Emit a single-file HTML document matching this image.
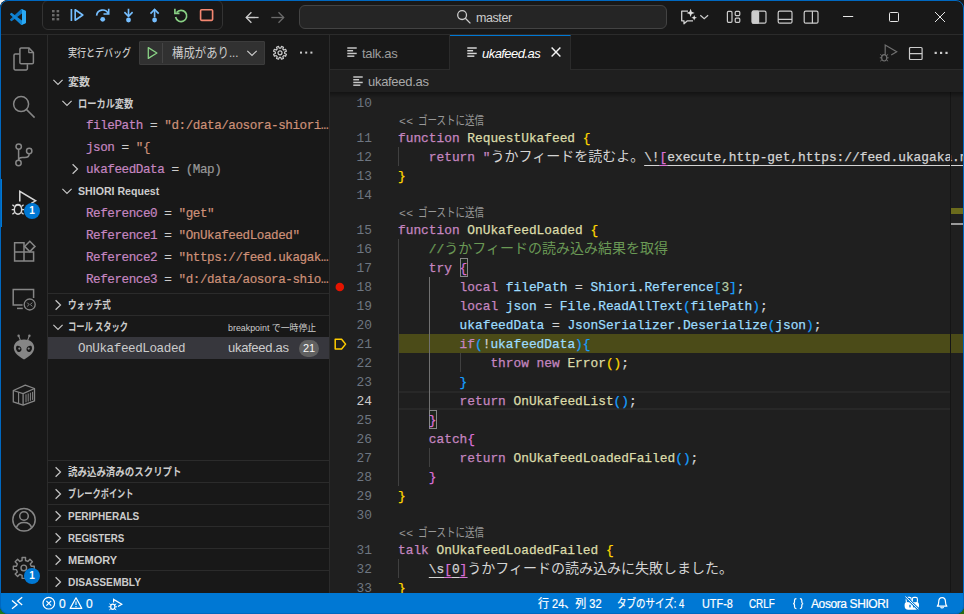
<!DOCTYPE html>
<html lang="ja">
<head>
<meta charset="utf-8">
<title>ukafeed.as - master - Visual Studio Code</title>
<style>
*{box-sizing:border-box}
html,body{margin:0;padding:0;width:964px;height:614px;overflow:hidden;background:#1a1a1a}
body{font-family:"Liberation Sans","Noto Sans CJK JP",sans-serif;font-size:13px;color:#ccc;position:relative}
.abs{position:absolute}
svg{display:block;overflow:visible}
.corner{position:absolute;width:10px;height:10px}
#win{position:absolute;left:0;top:0;width:964px;height:614px;background:#181818;border-radius:8px;overflow:hidden}
#frame{position:absolute;left:0;top:0;width:964px;height:614px;border:1px solid #0068c0;border-radius:8px;z-index:50}
/* title bar */
#title{position:absolute;left:0;top:0;width:964px;height:35px;background:#181818;border-bottom:1px solid #2b2b2b}
#dbgbar{position:absolute;left:42px;top:0;width:181px;height:30px;border:1px solid #333;border-radius:6px;background:#181818}
#cmd{position:absolute;left:299px;top:5px;width:368px;height:24px;border:1px solid #434343;border-radius:6px;background:#252525}
#cmd .lbl{position:absolute;left:176px;top:4px;font-size:12.500px;letter-spacing:-0.420px;color:#ccc;line-height:16px;white-space:nowrap}
/* activity bar */
#act{position:absolute;left:0;top:35px;width:48px;height:558px;background:#181818;border-right:1px solid #2b2b2b}
.badge{position:absolute;width:16px;height:16px;border-radius:8px;background:#0078d4;color:#fff;font-size:10px;font-weight:bold;line-height:16px;text-align:center}
/* sidebar */
#side{position:absolute;left:48px;top:35px;width:282px;height:558px;background:#181818;border-right:1px solid #2b2b2b;overflow:hidden}
.sx{display:inline-block;transform-origin:0 50%;white-space:nowrap}
.ph{position:absolute;left:0;width:281px;height:22px;border-top:1px solid #2b2b2b;font-size:11px;font-weight:bold;color:#ccc;line-height:21px;white-space:nowrap}
.ph .t{position:absolute;left:20px;top:1px}
.row{position:absolute;left:0;width:281px;height:22px;line-height:22px;white-space:nowrap;overflow:hidden}
.mono{font-family:"Liberation Mono","Noto Sans CJK JP",monospace}
.var{font-family:"Liberation Mono","Noto Sans CJK JP",monospace;font-size:12.6px;letter-spacing:-0.44px;-webkit-text-stroke:0.200px;position:absolute;left:38px;top:1px;white-space:pre}
.vn{color:#c586c0}
.vs{color:#ce9178}
.vg{color:#999}
.grp{position:absolute;left:30px;top:1px;font-size:11px;font-weight:bold;color:#ccc}
/* editor */
#ed{position:absolute;left:330px;top:35px;width:634px;height:558px;background:#1f1f1f;overflow:hidden}
#tabs{position:absolute;left:0;top:0;width:634px;height:35px;background:#181818;border-bottom:1px solid #2b2b2b}
.tab{position:absolute;top:0;height:35px;border-right:1px solid #2b2b2b;font-size:13px;line-height:35px;white-space:nowrap}
#bc{position:absolute;left:0;top:35px;width:634px;height:22px;background:#1f1f1f;font-size:13px;color:#a9a9a9;line-height:22px}
#code{position:absolute;left:0;top:57px;width:634px;height:501px;overflow:hidden}
.ln{position:absolute;left:0;width:42px;text-align:right;font-family:"Liberation Mono",monospace;font-size:12.83px;color:#6e7681;line-height:19px;height:19px;padding-top:1px}
.cl{position:absolute;left:68px;height:19px;line-height:19px;font-family:"Liberation Mono","Noto Sans CJK JP",monospace;font-size:12.83px;white-space:pre;color:#d4d4d4;padding-top:1px;-webkit-text-stroke:0.25px}
.ln.cur{color:#ccc}
.cl .j{font-size:14px;-webkit-text-stroke:0}
.lens{position:absolute;left:69px;height:16px;line-height:16px;font-size:12px;color:#999;white-space:nowrap}
.k{color:#c586c0}.f{color:#dcdcaa}.v{color:#9cdcfe}.s{color:#ce9178}.c{color:#6a9955}.n{color:#b5cea8}
.b1{color:#ffd700}.b2{color:#da70d6}.b3{color:#179fff}
.u,.u span{text-decoration:underline;text-decoration-thickness:1px;text-underline-offset:4px;text-decoration-skip-ink:none}
.g{position:absolute;width:1px;background:#404040}
/* status */
#status{position:absolute;left:0;top:593px;width:964px;height:21px;background:#0078d4;color:#fff;font-size:12px;line-height:22px;white-space:nowrap}
#status .it{position:absolute;top:0;height:22px;line-height:22px;-webkit-text-stroke:0.2px}
</style>
</head>
<body>
<div class="corner" style="left:0;top:0;background:#f3f3f3"></div>
<div class="corner" style="right:0;top:0;background:#1a1a1a"></div>
<div class="corner" style="left:0;bottom:0;background:#1e7a1e"></div>
<div class="corner" style="right:0;bottom:0;background:#2a6a10"></div>
<div id="win">

<!-- TITLE BAR -->
<div id="title">
<svg class="abs" style="left:10px;top:9px" width="16" height="16" viewBox="0 0 100 100">
<path fill="#0b76c4" d="M96.46 10.8 75.86.88a6.23 6.23 0 0 0-7.1 1.2L1.3 63.58a4.17 4.17 0 0 0 0 6.16l5.5 5a4.17 4.17 0 0 0 5.33.24L93.35 13.4c2.73-2.07 6.64-.12 6.64 3.3v-.24a6.25 6.25 0 0 0-3.53-5.63z"/>
<path fill="#1186d6" d="M96.46 89.2 75.86 99.1a6.23 6.23 0 0 1-7.1-1.2L1.3 36.4a4.17 4.17 0 0 1 0-6.16l5.5-5a4.17 4.17 0 0 1 5.33-.24L93.35 86.6c2.73 2.07 6.64.12 6.64-3.3v.24a6.25 6.25 0 0 1-3.53 5.63z"/>
<path fill="#2aa9f4" d="M75.86 99.13a6.23 6.23 0 0 1-7.1-1.21c2.3 2.3 6.25.67 6.25-2.59V4.67c0-3.26-3.94-4.89-6.25-2.59a6.23 6.23 0 0 1 7.1-1.21l20.6 9.9A6.25 6.25 0 0 1 100 16.4v67.2a6.25 6.25 0 0 1-3.54 5.63z"/>
</svg>
<div id="dbgbar"></div>
<svg class="abs" style="left:0;top:0" width="964" height="35" viewBox="0 0 964 35" fill="none" stroke-linecap="butt" stroke-linejoin="miter">
<!-- gripper -->
<g fill="#6b6b6b" stroke="none">
<rect x="52" y="10" width="2.6" height="2.4"/><rect x="56.6" y="10" width="2.6" height="2.4"/>
<rect x="52" y="14" width="2.6" height="2.4"/><rect x="56.6" y="14" width="2.6" height="2.4"/>
<rect x="52" y="18" width="2.6" height="2.4"/><rect x="56.6" y="18" width="2.6" height="2.4"/>
</g>
<!-- continue -->
<g stroke="#75beff" stroke-width="1.65">
<path d="M71.4 9v12"/>
<path d="M75.2 9.8v10.4l7.6-5.2z" stroke-linejoin="round"/>
</g>
<!-- step over -->
<g stroke="#75beff" stroke-width="1.65">
<path d="M96.6 15.6a6.1 6.1 0 0 1 11.6-2"/>
<path d="M108.7 8.8v5.2h-5.2"/>
<circle cx="102.700" cy="19.300" r="2.400" fill="#75beff" stroke="none"/>
</g>
<!-- step into -->
<g stroke="#75beff" stroke-width="1.65">
<path d="M128.5 8.8v7"/>
<path d="M124.4 12.2l4.1 4.1 4.1-4.1" stroke-linejoin="round"/>
<circle cx="128.5" cy="20" r="2.400" fill="#75beff" stroke="none"/>
</g>
<!-- step out -->
<g stroke="#75beff" stroke-width="1.65">
<path d="M154.6 17.2v-7.6"/>
<path d="M150.5 13.6l4.1-4.1 4.1 4.1"/>
<circle cx="154.6" cy="20" r="2.400" fill="#75beff" stroke="none"/>
</g>
<!-- restart -->
<g stroke="#89d185" stroke-width="1.65">
<path d="M176.6 12.6a5.6 5.6 0 1 1-1 4.4"/>
<path d="M174.9 8.8v4.6h4.6"/>
</g>
<!-- stop -->
<rect x="200.6" y="9.7" width="12" height="10.6" rx="1" stroke="#f48771" stroke-width="1.65"/>
<!-- nav arrows -->
<g stroke="#cccccc" stroke-width="1.3">
<path d="M246.2 17.5h12.4"/><path d="M251.4 12.3l-5.2 5.2 5.2 5.2"/>
</g>
<g stroke="#6b6b6b" stroke-width="1.3">
<path d="M271.300 17.5h12.4"/><path d="M278.500 12.3l5.2 5.2-5.2 5.2"/>
</g>
</svg>
<div id="cmd">
<svg class="abs" style="left:156px;top:3px" width="16" height="16" viewBox="0 0 16 16" fill="none" stroke="#ccc" stroke-width="1.3"><circle cx="6.100" cy="6.100" r="4.400"/><path d="M9.300 9.300l5.100 5.100"/></svg>
<span class="lbl">master</span>
</div>
<svg class="abs" style="left:0;top:0" width="964" height="35" viewBox="0 0 964 35" fill="none">
<!-- copilot chat -->
<g stroke="#d0d0d0" stroke-width="1.3" stroke-linejoin="round">
<path d="M688 11.2h-6.3v9.6h2.3v3l3.4-3h5.6"/>
</g>
<g fill="#e0e0e0">
<path d="M690.6 8.8l1.1 3 3 1.1-3 1.1-1.1 3-1.1-3-3-1.1 3-1.1z"/>
<path d="M694.2 15l.8 2 2 .8-2 .8-.8 2-.8-2-2-.8 2-.8z"/>
</g>
<path d="M700.300 15.200l3.900 3.600 3.900-3.600" stroke="#ccc" stroke-width="1.2"/>
<!-- layout icons -->
<g stroke="#cccccc" stroke-width="1.2">
<rect x="727.4" y="11.4" width="4.6" height="10.900" rx="1"/>
<rect x="735.2" y="11.4" width="4.6" height="4.2" rx="1"/>
<rect x="735.2" y="18.200" width="4.6" height="4.100" rx="1"/>
<rect x="752.2" y="11.2" width="13.8" height="12" rx="1.5"/>
<rect x="752.2" y="11.2" width="6.4" height="12" rx="1" fill="#cccccc"/>
<rect x="778.2" y="11.2" width="13.8" height="12" rx="1.5"/>
<path d="M778.2 19.4h13.8"/>
<rect x="804.2" y="11.2" width="13.8" height="12" rx="1.5"/>
<path d="M812.4 11.2v12"/>
</g>
<!-- window controls -->
<g stroke="#e6e6e6" stroke-width="1">
<path d="M843 16.500h10.200"/>
<rect x="889.500" y="12.500" width="9" height="9" rx="1"/>
<path d="M935 12l10 10M945 12l-10 10"/>
</g>
</svg>
</div>

<!-- ACTIVITY BAR -->
<div id="act">
<div class="abs" style="left:0;top:144px;width:2px;height:48px;background:#0078d4"></div>
<svg class="abs" style="left:0;top:0" width="48" height="557" viewBox="0 35 48 557" fill="none" stroke="#868686" stroke-width="1.5" stroke-linejoin="round">
<!-- explorer -->
<path d="M21.2 47.9h7.6l4.6 4.6v10a1.3 1.3 0 0 1-1.3 1.3H21.2a1.3 1.3 0 0 1-1.3-1.3V49.2a1.3 1.3 0 0 1 1.3-1.3z"/>
<path d="M28.8 48.2v4.4h4.4" stroke-width="1.3"/>
<path d="M19.6 54H15.3a1.3 1.3 0 0 0-1.3 1.3v13.3a1.3 1.3 0 0 0 1.3 1.3h10.8a1.3 1.3 0 0 0 1.3-1.3V64.2"/>
<!-- search -->
<circle cx="21.1" cy="104.1" r="7.5"/><path d="M26.6 109.6l8 8"/>
<!-- scm -->
<circle cx="18.7" cy="146.6" r="2.7"/><circle cx="29.2" cy="151" r="2.7"/><circle cx="18.5" cy="163" r="2.7"/>
<path d="M18.6 149.4v10.8"/><path d="M29.2 153.8c0 2.8-2 3.8-4.4 3.8h-2.4c-2.2 0-3.8.9-3.8 2.6"/>
<!-- debug (active) -->
<g stroke="#d7d7d7">
<path d="M19.8 201.6v-10.2l15.8 9.4-4.4 2.6" stroke-linejoin="miter"/>
<ellipse cx="18" cy="209.6" rx="3.7" ry="4.6"/>
<path d="M15.2 206.4c.6-2.6 5-2.6 5.6 0" stroke-width="1.3"/>
<path d="M14.3 209.6h-2.6M24.3 209.6h-2.6M14.6 206.6l-2.2-1.8M21.4 206.6l2.2-1.8M14.6 212.4l-2.2 1.8M21.4 212.4l2.2 1.8" stroke-width="1.3"/>
</g>
<!-- extensions -->
<path d="M14.6 242.7h9.4v9.2h-9.4zM14.6 251.9h9.4v9.2h-9.4zM24 251.9h9.6v9.2H24z" stroke-linejoin="miter"/>
<path d="M29.8 241.2l5.2 5.2-5.2 5.2-5.2-5.2z" stroke-linejoin="miter"/>
<!-- remote explorer -->
<path d="M22.6 305H13.2v-15.4h20.4v8.4" stroke-linejoin="miter"/>
<path d="M17 308.4h5.8"/>
<circle cx="29.7" cy="304.5" r="5.5" stroke-width="1.3"/>
<path d="M27.2 302.6l1.9 1.9-1.9 1.9M32.2 302.6l-1.9 1.9 1.9 1.9" stroke-width="1"/>
<!-- alien -->
<g stroke="none" fill="#868686">
<path d="M24 339.6c6.2 0 10.2 3.4 10.2 8.2 0 5.2-5.6 9.4-10.2 11.6-4.600-2.2-10.200-6.400-10.200-11.600 0-4.800 4-8.200 10.200-8.200z"/>
<circle cx="18.600" cy="335.800" r="1.200"/><circle cx="29.400" cy="335.800" r="1.200"/>
</g>
<path d="M18.700 336l1.700 4.400M29.300 336l-1.700 4.400" stroke-width="1.100"/>
<g stroke="none" fill="#181818">
<path d="M16.400 346.200c1.800-.9 4.400.1 5 2.400.5 1.800-.5 3.300-2 3.500-2.100.2-4.300-2.700-3-5.900z"/>
<path d="M31.600 346.200c-1.800-.9-4.400.1-5 2.400-.5 1.800.5 3.300 2 3.500 2.100.2 4.300-2.700 3-5.900z"/>
</g>
<g stroke="none" fill="#868686"><circle cx="19.300" cy="348.600" r="1.100"/><circle cx="28.700" cy="348.600" r="1.100"/></g>
<!-- container -->
<g stroke-width="1.300">
<path d="M13.300 390.500l12-5.400 9.200 3.400v12.400l-11.400 4.200-9.800-3.200z"/>
<path d="M13.300 390.500l9.800 3.200 11.400-5.200M23.100 393.700v11.400"/>
<path d="M18.600 392.300v11.200" stroke-width="1.100"/>
<path d="M26 394.300v8M28.200 393.500v8M30.400 392.700v8M32.600 391.900v8" stroke-width="1"/>
</g>
<!-- account -->
<circle cx="24" cy="519.800" r="11.200"/>
<circle cx="24" cy="516" r="4.300"/>
<path d="M16.400 527.800c.9-3.600 3.900-5.400 7.600-5.400s6.700 1.800 7.600 5.400"/>
<!-- gear -->
<g transform="translate(0 35)">
<path d="M31.20 531.18 L34.26 531.16 L34.26 534.64 L31.20 534.62 L30.25 536.92 L32.42 539.06 L29.96 541.52 L27.82 539.35 L25.52 540.30 L25.54 543.36 L22.06 543.36 L22.08 540.30 L19.78 539.35 L17.64 541.52 L15.18 539.06 L17.35 536.92 L16.40 534.62 L13.34 534.64 L13.34 531.16 L16.40 531.18 L17.35 528.88 L15.18 526.74 L17.64 524.28 L19.78 526.45 L22.08 525.50 L22.06 522.44 L25.54 522.44 L25.52 525.50 L27.82 526.45 L29.96 524.28 L32.42 526.74 L30.25 528.88z" stroke-width="1.400"/>
<circle cx="23.800" cy="532.900" r="2.800" stroke-width="1.400"/>
</g>
</svg>
<div class="badge" style="left:24px;top:168px">1</div>
<div class="badge" style="left:24px;top:533px">1</div>
</div>

<!-- SIDEBAR -->
<div id="side">
<div class="abs" style="left:20px;top:9px;font-size:11px;font-weight:500;line-height:18px;color:#ccc;white-space:nowrap"><span class="sx" style="transform:scaleX(0.82)">実行とデバッグ</span></div>
<div class="abs" style="left:91px;top:6px;width:126px;height:24px;background:#313131;border:1px solid #3c3c3c;border-radius:1px">
<svg class="abs" style="left:5px;top:3px" width="16" height="16" viewBox="0 0 16 16" fill="none" stroke="#89d185" stroke-width="1.300" stroke-linejoin="round"><path d="M3.300 2.600v10.800l8.600-5.400z"/></svg>
<div class="abs" style="left:22px;top:1px;width:1px;height:20px;background:#454545"></div>
<div class="abs" style="left:32px;top:1px;font-size:13px;line-height:20px;color:#ccc;white-space:nowrap"><span class="sx" style="transform:scaleX(0.876)">構成があり...</span></div>
<svg class="abs" style="left:104px;top:3px" width="16" height="16" viewBox="0 0 16 16" fill="none" stroke="#ccc" stroke-width="1.200"><path d="M3.300 5.800l4.700 4.700 4.700-4.700"/></svg>
</div>
<svg class="abs" style="left:224px;top:10px" width="16" height="16" viewBox="0 0 16 16" fill="none" stroke="#ccc" stroke-width="1.200" stroke-linejoin="round"><path d="M12.64 8.54 L14.43 9.29 L13.60 11.29 L11.80 10.56 L10.76 11.60 L11.49 13.40 L9.49 14.23 L8.74 12.44 L7.26 12.44 L6.51 14.23 L4.51 13.40 L5.24 11.60 L4.20 10.56 L2.40 11.29 L1.57 9.29 L3.36 8.54 L3.36 7.06 L1.57 6.31 L2.40 4.31 L4.20 5.04 L5.24 4.00 L4.51 2.20 L6.51 1.37 L7.26 3.16 L8.74 3.16 L9.49 1.37 L11.49 2.20 L10.76 4.00 L11.80 5.04 L13.60 4.31 L14.43 6.31 L12.64 7.06z"/><circle cx="8" cy="7.800" r="2"/></svg>
<svg class="abs" style="left:250px;top:10px" width="16" height="16" viewBox="0 0 16 16" fill="#ccc"><rect x="2" y="6.600" width="2" height="2"/><rect x="7.200" y="6.600" width="2" height="2"/><rect x="12.400" y="6.600" width="2" height="2"/></svg>
<div class="ph" style="top:35px;border-top-color:transparent;"><svg class="abs" style="left:2px;top:3px" width="16" height="16" viewBox="0 0 16 16" fill="none" stroke="#c5c5c5" stroke-width="1.2"><path d="M3.400 5.900l4.600 4.500 4.600-4.500"/></svg><span class="t">変数</span></div>
<div class="row" style="top:57px"><svg class="abs" style="left:11px;top:3px" width="16" height="16" viewBox="0 0 16 16" fill="none" stroke="#c5c5c5" stroke-width="1.2"><path d="M3.400 5.900l4.600 4.500 4.600-4.500"/></svg><span class="grp"><span class="sx" style="transform:scaleX(0.838)">ローカル変数</span></span></div>
<div class="row" style="top:79px"><span class="var"><span class="vn">filePath</span><span class="ve"> = </span><span class="vs">"d:/data/aosora-shiori…</span></span></div>
<div class="row" style="top:101px"><span class="var"><span class="vn">json</span><span class="ve"> = </span><span class="vs">"{</span></span></div>
<div class="row" style="top:123px"><svg class="abs" style="left:19px;top:3px" width="16" height="16" viewBox="0 0 16 16" fill="none" stroke="#c5c5c5" stroke-width="1.2"><path d="M5.600 3.200l4.900 4.800-4.900 4.800"/></svg><span class="var"><span class="vn">ukafeedData</span><span class="ve"> = </span><span class="vg">(Map)</span></span></div>
<div class="row" style="top:145px"><svg class="abs" style="left:11px;top:3px" width="16" height="16" viewBox="0 0 16 16" fill="none" stroke="#c5c5c5" stroke-width="1.2"><path d="M3.400 5.900l4.600 4.500 4.600-4.500"/></svg><span class="grp" style="top:0"><span class="sx" style="transform:scaleX(0.963)">SHIORI Request</span></span></div>
<div class="row" style="top:167px"><span class="var"><span class="vn">Reference0</span><span class="ve"> = </span><span class="vs">"get"</span></span></div>
<div class="row" style="top:189px"><span class="var"><span class="vn">Reference1</span><span class="ve"> = </span><span class="vs">"OnUkafeedLoaded"</span></span></div>
<div class="row" style="top:211px"><span class="var"><span class="vn">Reference2</span><span class="ve"> = </span><span class="vs">"https://feed.ukagak…</span></span></div>
<div class="row" style="top:233px"><span class="var"><span class="vn">Reference3</span><span class="ve"> = </span><span class="vs">"d:/data/aosora-shio…</span></span></div>
<div class="ph" style="top:258px;"><svg class="abs" style="left:2px;top:3px" width="16" height="16" viewBox="0 0 16 16" fill="none" stroke="#c5c5c5" stroke-width="1.2"><path d="M5.600 3.200l4.900 4.800-4.900 4.800"/></svg><span class="t"><span class="sx" style="transform:scaleX(0.781)">ウォッチ式</span></span></div>
<div class="ph" style="top:280px;"><svg class="abs" style="left:2px;top:3px" width="16" height="16" viewBox="0 0 16 16" fill="none" stroke="#c5c5c5" stroke-width="1.2"><path d="M3.400 5.900l4.600 4.500 4.600-4.500"/></svg><span class="t"><span class="sx" style="transform:scaleX(0.749)">コール スタック</span></span><span class="abs" style="left:180px;top:2px;font-size:9px;font-weight:normal;color:#ccc;white-space:nowrap"><span class="sx" style="transform:scaleX(0.985)">breakpoint で一時停止</span></span></div>
<div class="row" style="top:302px;background:#37373d"><span class="abs mono" style="left:30px;top:1px;font-size:12.600px;letter-spacing:-0.410px;color:#ccc">OnUkafeedLoaded</span><span class="abs" style="left:180px;top:0;font-size:13px;color:#ccc;letter-spacing:-0.300px">ukafeed.as</span><span class="abs" style="left:251px;top:3px;width:20px;height:17px;border-radius:9px;background:#616161;color:#f8f8f8;font-size:11px;line-height:17px;text-align:center">21</span></div>
<div class="ph" style="top:425px;"><svg class="abs" style="left:2px;top:3px" width="16" height="16" viewBox="0 0 16 16" fill="none" stroke="#c5c5c5" stroke-width="1.2"><path d="M5.600 3.200l4.900 4.800-4.900 4.800"/></svg><span class="t"><span class="sx" style="transform:scaleX(0.86)">読み込み済みのスクリプト</span></span></div>
<div class="ph" style="top:447px;"><svg class="abs" style="left:2px;top:3px" width="16" height="16" viewBox="0 0 16 16" fill="none" stroke="#c5c5c5" stroke-width="1.2"><path d="M5.600 3.200l4.900 4.800-4.900 4.800"/></svg><span class="t"><span class="sx" style="transform:scaleX(0.744)">ブレークポイント</span></span></div>
<div class="ph" style="top:469px;"><svg class="abs" style="left:2px;top:3px" width="16" height="16" viewBox="0 0 16 16" fill="none" stroke="#c5c5c5" stroke-width="1.2"><path d="M5.600 3.200l4.900 4.800-4.900 4.800"/></svg><span class="t"><span class="sx" style="transform:scaleX(0.910)">PERIPHERALS</span></span></div>
<div class="ph" style="top:491px;"><svg class="abs" style="left:2px;top:3px" width="16" height="16" viewBox="0 0 16 16" fill="none" stroke="#c5c5c5" stroke-width="1.2"><path d="M5.600 3.200l4.900 4.800-4.900 4.800"/></svg><span class="t"><span class="sx" style="transform:scaleX(0.885)">REGISTERS</span></span></div>
<div class="ph" style="top:513px;"><svg class="abs" style="left:2px;top:3px" width="16" height="16" viewBox="0 0 16 16" fill="none" stroke="#c5c5c5" stroke-width="1.2"><path d="M5.600 3.200l4.900 4.800-4.900 4.800"/></svg><span class="t">MEMORY</span></div>
<div class="ph" style="top:535px;"><svg class="abs" style="left:2px;top:3px" width="16" height="16" viewBox="0 0 16 16" fill="none" stroke="#c5c5c5" stroke-width="1.2"><path d="M5.600 3.200l4.900 4.800-4.900 4.800"/></svg><span class="t"><span class="sx" style="transform:scaleX(0.930)">DISASSEMBLY</span></span></div>
</div>

<!-- EDITOR -->
<div id="ed">
<div id="tabs">
<div class="tab" style="left:0;width:120px;background:#181818;color:#9d9d9d;border-bottom:1px solid #2b2b2b"><svg class="abs" style="left:17px;top:12px" width="10" height="10" viewBox="0 0 11 11" fill="#c8c8c8"><rect x="0.300" y="0.300" width="10.400" height="1.600"/><rect x="0.300" y="3.300" width="6.400" height="1.600"/><rect x="0.300" y="6.300" width="10.400" height="1.600"/><rect x="0.300" y="9.300" width="7.800" height="1.600"/></svg><span class="abs" style="left:32px;top:1px;letter-spacing:-0.300px">talk.as</span></div>
<div class="tab" style="left:120px;width:121px;background:#1f1f1f;color:#fff;border-top:1px solid #0078d4;line-height:33px"><svg class="abs" style="left:17px;top:11px" width="10" height="10" viewBox="0 0 11 11" fill="#d8d8d8"><rect x="0.300" y="0.300" width="10.400" height="1.600"/><rect x="0.300" y="3.300" width="6.400" height="1.600"/><rect x="0.300" y="6.300" width="10.400" height="1.600"/><rect x="0.300" y="9.300" width="7.800" height="1.600"/></svg><span class="abs" style="left:32px;top:1px;font-style:italic;letter-spacing:-0.550px">ukafeed.as</span>
<svg class="abs" style="left:101px;top:11px" width="10" height="10" viewBox="0 0 10 10" fill="none" stroke="#f4f4f4" stroke-width="1.450"><path d="M0.600 0.600l8.800 8.800M9.400 0.600l-8.800 8.800"/></svg></div>
<svg class="abs" style="left:548px;top:8px" width="20" height="20" viewBox="0 0 20 20" fill="none" stroke="#6f6f6f" stroke-width="1.200" stroke-linejoin="round">
<path d="M7.200 11.500v-9.500l11.500 6.800-5.500 3.300" stroke-linejoin="miter"/>
<ellipse cx="6.200" cy="14.800" rx="2.600" ry="3.200"/>
<path d="M3.400 14.800h-1.600M10.600 14.800h-1.600M3.800 12.600l-1.500-1.200M8.600 12.600l1.500-1.200M3.800 17l-1.500 1.200M8.600 17l1.500 1.200" stroke-width="1"/>
</svg>
<svg class="abs" style="left:579px;top:11px" width="14" height="14" viewBox="0 0 14 14" fill="none" stroke="#ccc" stroke-width="1.200"><rect x="0.500" y="1.500" width="12.600" height="12" rx="1"/><path d="M0.500 7.600h12.600"/></svg>
<svg class="abs" style="left:604px;top:10px" width="16" height="16" viewBox="0 0 16 16" fill="#ccc"><rect x="0.600" y="6.800" width="2.200" height="2.200"/><rect x="6" y="6.800" width="2.200" height="2.200"/><rect x="11.400" y="6.800" width="2.200" height="2.200"/></svg>
</div>
<div id="bc"><svg class="abs" style="left:23px;top:6px" width="10" height="10" viewBox="0 0 11 11" fill="#c8c8c8"><rect x="0.300" y="0.300" width="10.400" height="1.600"/><rect x="0.300" y="3.300" width="6.400" height="1.600"/><rect x="0.300" y="6.300" width="10.400" height="1.600"/><rect x="0.300" y="9.300" width="7.800" height="1.600"/></svg><span class="abs" style="left:38px;top:1px;letter-spacing:-0.300px">ukafeed.as</span></div>
<div id="code">
<div class="abs" style="left:68px;top:242px;width:566px;height:19px;background:#4b4b18"></div>
<div class="abs" style="left:68px;top:299px;width:552px;height:19px;border-top:2px solid #282828;border-bottom:2px solid #282828"></div>
<div class="g" style="left:68px;top:55px;height:19px;background:#404040"></div>
<div class="g" style="left:68px;top:147px;height:247px;background:#404040"></div>
<div class="g" style="left:68px;top:467px;height:19px;background:#404040"></div>
<div class="g" style="left:99px;top:185px;height:133px;background:#707070"></div>
<div class="g" style="left:99px;top:356px;height:19px;background:#404040"></div>
<div class="g" style="left:130px;top:261px;height:19px;background:#404040"></div>
<div class="abs" style="left:130px;top:166px;width:8px;height:19px;border:1px solid #888;background:rgba(0,100,0,0.1)"></div>
<div class="abs" style="left:99px;top:318px;width:8px;height:19px;border:1px solid #888;background:rgba(0,100,0,0.1)"></div>
<svg class="abs" style="left:0;top:185px" width="20" height="19" viewBox="0 0 20 19"><circle cx="9.800" cy="10.100" r="4.250" fill="#e51400"/></svg>
<svg class="abs" style="left:3px;top:244px" width="16" height="16" viewBox="0 0 16 16" fill="none" stroke="#ffcc00" stroke-width="1.500" stroke-linejoin="round"><path d="M2.200 3.200h6.400l4 4.900-4 4.900h-6.400z"/></svg>
<div class="lens" style="top:21px"><span class="mono" style="font-size:11.500px;letter-spacing:0.300px">&lt;&lt;</span><span class="sx" style="margin-left:5px;transform:scaleX(0.793)">ゴーストに送信</span></div>
<div class="lens" style="top:113px"><span class="mono" style="font-size:11.500px;letter-spacing:0.300px">&lt;&lt;</span><span class="sx" style="margin-left:5px;transform:scaleX(0.793)">ゴーストに送信</span></div>
<div class="lens" style="top:433px"><span class="mono" style="font-size:11.500px;letter-spacing:0.300px">&lt;&lt;</span><span class="sx" style="margin-left:5px;transform:scaleX(0.793)">ゴーストに送信</span></div>
<div class="ln" style="top:1px">10</div>
<div class="ln" style="top:36px">11</div>
<div class="cl" style="top:36px"><span class="k">function</span> <span class="f">RequestUkafeed</span> <span class="b1">{</span></div>
<div class="ln" style="top:55px">12</div>
<div class="cl" style="top:55px">    <span class="k">return</span> <span class="k">"</span><span class="j">うかフィードを読むよ。</span><span class="u">\!<span class="b2">[</span>execute,http-get,https://feed.ukagaka.net/feed<span class="b2">]</span></span><span class="k">"</span>;</div>
<div class="ln" style="top:74px">13</div>
<div class="cl" style="top:74px"><span class="b1">}</span></div>
<div class="ln" style="top:93px">14</div>
<div class="ln" style="top:128px">15</div>
<div class="cl" style="top:128px"><span class="k">function</span> <span class="f">OnUkafeedLoaded</span> <span class="b1">{</span></div>
<div class="ln" style="top:147px">16</div>
<div class="cl" style="top:147px">    <span class="c">//<span class="j">うかフィードの読み込み結果を取得</span></span></div>
<div class="ln" style="top:166px">17</div>
<div class="cl" style="top:166px">    <span class="k">try</span> <span class="b2">{</span></div>
<div class="ln" style="top:185px">18</div>
<div class="cl" style="top:185px">        <span class="k">local</span> <span class="v">filePath</span> = <span class="v">Shiori</span>.<span class="v">Reference</span><span class="b3">[</span><span class="n">3</span><span class="b3">]</span>;</div>
<div class="ln" style="top:204px">19</div>
<div class="cl" style="top:204px">        <span class="k">local</span> <span class="v">json</span> = <span class="v">File</span>.<span class="v">ReadAllText</span><span class="b3">(</span><span class="v">filePath</span><span class="b3">)</span>;</div>
<div class="ln" style="top:223px">20</div>
<div class="cl" style="top:223px">        <span class="v">ukafeedData</span> = <span class="v">JsonSerializer</span>.<span class="v">Deserialize</span><span class="b3">(</span><span class="v">json</span><span class="b3">)</span>;</div>
<div class="ln" style="top:242px">21</div>
<div class="cl" style="top:242px">        <span class="k">if</span><span class="b3">(</span>!<span class="v">ukafeedData</span><span class="b3">)</span><span class="b3">{</span></div>
<div class="ln" style="top:261px">22</div>
<div class="cl" style="top:261px">            <span class="k">throw</span> <span class="k">new</span> <span class="f">Error</span><span class="b1">(</span><span class="b1">)</span>;</div>
<div class="ln" style="top:280px">23</div>
<div class="cl" style="top:280px">        <span class="b3">}</span></div>
<div class="ln cur" style="top:299px">24</div>
<div class="cl" style="top:299px">        <span class="k">return</span> <span class="f">OnUkafeedList</span><span class="b3">(</span><span class="b3">)</span>;</div>
<div class="ln" style="top:318px">25</div>
<div class="cl" style="top:318px">    <span class="b2">}</span></div>
<div class="ln" style="top:337px">26</div>
<div class="cl" style="top:337px">    <span class="k">catch</span><span class="b2">{</span></div>
<div class="ln" style="top:356px">27</div>
<div class="cl" style="top:356px">        <span class="k">return</span> <span class="f">OnUkafeedLoadedFailed</span><span class="b3">(</span><span class="b3">)</span>;</div>
<div class="ln" style="top:375px">28</div>
<div class="cl" style="top:375px">    <span class="b2">}</span></div>
<div class="ln" style="top:394px">29</div>
<div class="cl" style="top:394px"><span class="b1">}</span></div>
<div class="ln" style="top:413px">30</div>
<div class="ln" style="top:448px">31</div>
<div class="cl" style="top:448px"><span class="k">talk</span> <span class="f">OnUkafeedLoadedFailed</span> <span class="b1">{</span></div>
<div class="ln" style="top:467px">32</div>
<div class="cl" style="top:467px">    <span class="u">\s<span class="b2">[</span>0<span class="b2">]</span></span><span class="j">うかフィードの読み込みに失敗しました。</span></div>
<div class="ln" style="top:486px">33</div>
<div class="cl" style="top:486px"><span class="b1">}</span></div>
<div class="abs" style="left:620px;top:0;width:1px;height:500px;background:#151515"></div>
<div class="abs" style="left:621px;top:116px;width:13px;height:6px;background:#6b6b1c"></div>
<div class="abs" style="left:621px;top:131px;width:13px;height:2px;background:#9a9a9a"></div>
<div class="abs" style="left:0;top:0;width:634px;height:6px;background:linear-gradient(#000 0,rgba(0,0,0,0) 100%);opacity:.4"></div>
</div>
</div>

<!-- STATUS BAR -->
<div id="status">
<svg class="abs" style="left:0;top:0" width="964" height="21" viewBox="0 593 964 21" fill="none" stroke="#fff" stroke-width="1.200">
<!-- remote -->
<path d="M12 600.600l5 4.100-5 4.100M22.200 597.200l-4.600 3.900 4.600 3.900" stroke-width="1.300"/>
<!-- error -->
<circle cx="48.800" cy="603.200" r="5.800"/>
<path d="M46.400 600.800l4.800 4.800M51.200 600.800l-4.800 4.800"/>
<!-- warning -->
<path d="M76 597.800l5.800 10.600h-11.600z" stroke-linejoin="round"/>
<path d="M76 601.400v3.600M76 606v1.200" stroke-width="1.100"/>
<!-- debug -->
<path d="M113.600 602.600v-3.200l8.200 4.800-3.800 2.300" stroke-linejoin="miter"/>
<ellipse cx="112.800" cy="606.800" rx="2.100" ry="2.600"/>
<path d="M110.400 606.800h-1.800M117 606.800h-1.800M110.800 604.800l-1.400-1M114.800 604.800l1.400-1M110.800 608.800l-1.400 1M114.800 608.800l1.400 1" stroke-width="1"/>
<!-- braces -->
<path d="M796.400 598.600c-1.500 0-1.900.7-1.900 1.800v1.700c0 .8-.4 1.500-1.400 1.500 1 0 1.400.7 1.400 1.500v1.700c0 1.100.4 1.800 1.900 1.800M799.900 598.600c1.500 0 1.900.7 1.900 1.800v1.700c0 .8.400 1.500 1.400 1.500-1 0-1.400.7-1.400 1.500v1.700c0 1.100-.4 1.800-1.900 1.800"/>
<!-- copilot off -->
<g stroke-width="1.100">
<rect x="904.600" y="601.400" width="14.400" height="8.300" rx="3.600" fill="#fff" stroke="none"/>
<rect x="906.200" y="597.400" width="5" height="5.400" rx="1.600" fill="#0078d4"/>
<rect x="912.400" y="597.400" width="5" height="5.400" rx="1.600" fill="#0078d4"/>
<rect x="909.300" y="604.800" width="1.400" height="2.600" fill="#0078d4" stroke="none"/>
<rect x="913" y="604.800" width="1.400" height="2.600" fill="#0078d4" stroke="none"/>
<path d="M905.400 596.600l13 12.600" stroke="#0078d4" stroke-width="2.600"/>
<path d="M905.400 596.600l13 12.600" stroke="#fff" stroke-width="1"/>
</g>
<!-- bell -->
<g transform="translate(-0.700 -0.400)">
<path d="M938 606.600c1.200-1 1.400-2 1.400-4.200 0-2.800 1.400-4.400 3.400-4.400s3.400 1.600 3.400 4.400c0 2.200.2 3.200 1.400 4.200z" stroke-linejoin="round"/>
<path d="M941.400 607.200c.2.800.8 1.200 1.400 1.200s1.200-.4 1.400-1.200"/>
</g>
</svg>
<span class="it" style="left:59px">0</span>
<span class="it" style="left:86px">0</span>
<span class="it" style="left:538px"><span class="sx" style="transform:scaleX(0.917)">行 24、列 32</span></span>
<span class="it" style="left:617px"><span class="sx" style="transform:scaleX(0.792)">タブのサイズ: 4</span></span>
<span class="it" style="left:702px"><span class="sx" style="transform:scaleX(0.906)">UTF-8</span></span>
<span class="it" style="left:749px"><span class="sx" style="transform:scaleX(0.820)">CRLF</span></span>
<span class="it" style="left:811px;letter-spacing:-0.400px">Aosora SHIORI</span>
</div>

</div>
<div id="frame"></div>
</body>
</html>
